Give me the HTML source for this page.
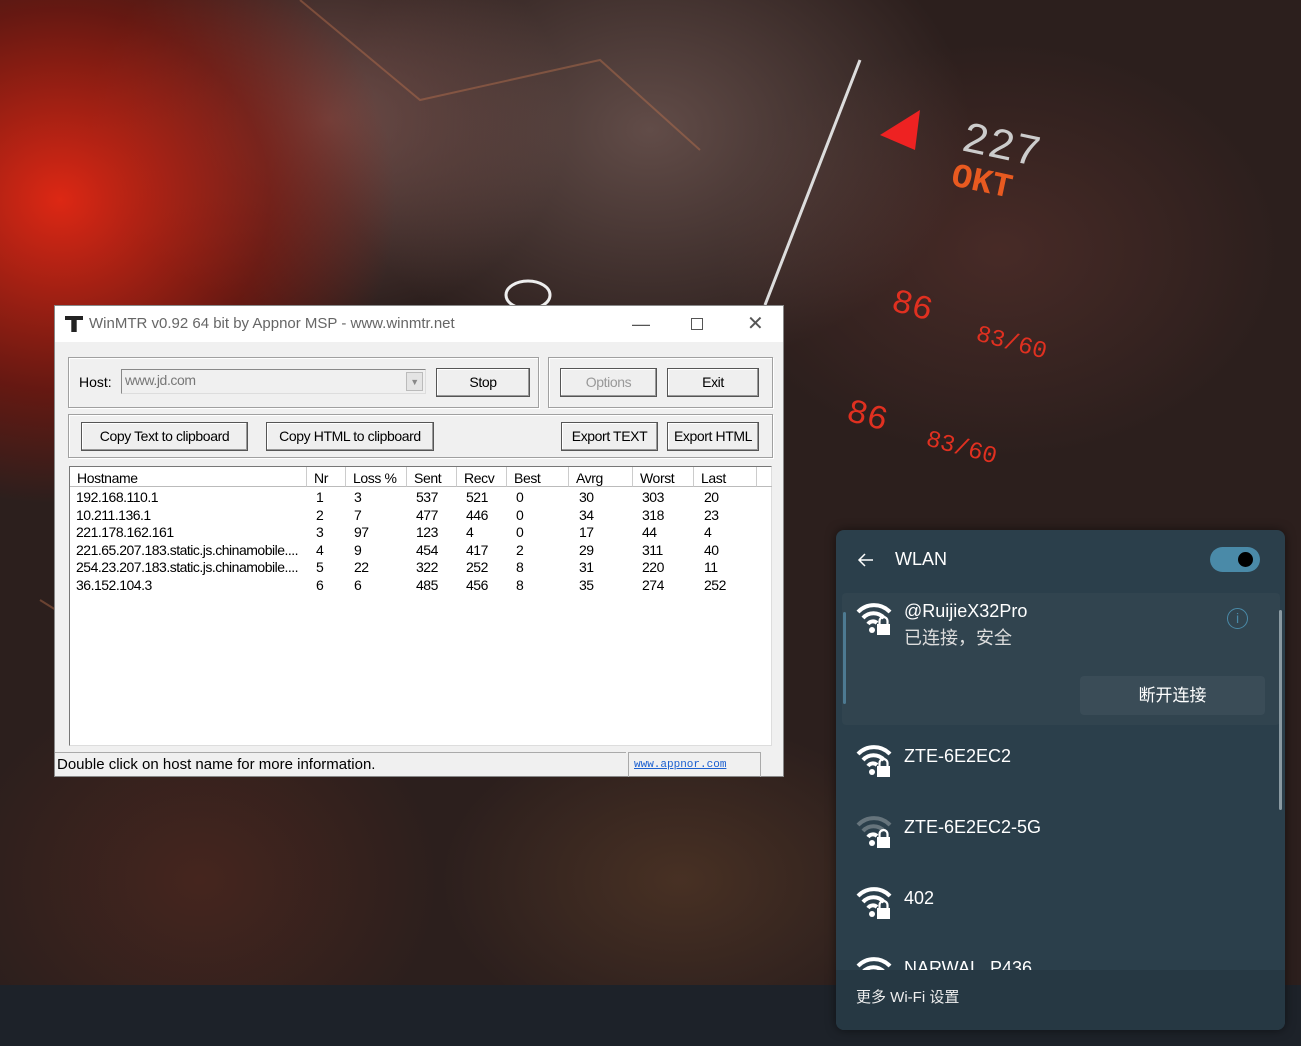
<!DOCTYPE html>
<html><head><meta charset="utf-8"><style>
*{margin:0;padding:0;box-sizing:border-box}
body{width:1301px;height:1046px;overflow:hidden;position:relative;font-family:"Liberation Sans","Noto Sans CJK SC",sans-serif;
background:
radial-gradient(ellipse 420px 380px at 60px 200px,rgba(230,40,20,.95),rgba(140,20,10,.6) 50%,transparent 80%),
radial-gradient(ellipse 300px 250px at 330px 120px,rgba(130,90,85,.75),transparent 80%),
radial-gradient(ellipse 400px 300px at 650px 130px,rgba(120,95,90,.7),transparent 80%),
radial-gradient(ellipse 350px 260px at 1000px 250px,rgba(90,50,45,.6),transparent 80%),
radial-gradient(ellipse 300px 250px at 200px 880px,rgba(80,40,30,.7),transparent 80%),
radial-gradient(ellipse 300px 200px at 680px 880px,rgba(90,60,40,.6),transparent 80%),
#2c1f1d}
.abs{position:absolute}
.win{left:54px;top:305px;width:730px;height:472px;background:#f0f0f0;border:1px solid #888}
.title{height:36px;background:#fff;font-size:15px;color:#666;line-height:36px;padding-left:34px}
.grp{position:absolute;border:1px solid #a0a0a0;box-shadow:inset 1px 1px 0 #fff,1px 1px 0 #fff}
.btn{position:absolute;border:1px solid #555;background:#efefef;box-shadow:inset -1px -1px 0 #999,inset 1px 1px 0 #fff;font-size:14px;text-align:center;color:#000;letter-spacing:-.4px}
.cell{position:absolute;font-size:14px;color:#000;letter-spacing:-.5px;white-space:nowrap}
.hd{position:absolute;top:0;height:20px;border-right:1px solid #ccc;border-bottom:1px solid #bbb;font-size:14px;line-height:22px;padding-left:7px;letter-spacing:-.4px}
.wifi{left:836px;top:530px;width:449px;height:500px;background:#2b3f4b;border-radius:8px;color:#fff;overflow:hidden;box-shadow:0 0 10px rgba(0,0,0,.5)}
.net{position:absolute;left:68px;font-size:18px;color:#fff}
</style></head><body>
<svg class="abs" style="left:0;top:0" width="1301" height="1046">
<line x1="860" y1="60" x2="765" y2="305" stroke="#ddd" stroke-width="3"/>
<ellipse cx="528" cy="295" rx="22" ry="14" fill="none" stroke="#eee" stroke-width="3"/>
<polygon points="880,135 920,110 915,150" fill="#e22"/>
<text x="960" y="150" font-size="44" fill="#ccc" font-family="Liberation Mono" transform="rotate(12 960 150)">227</text>
<text x="950" y="185" font-size="34" fill="#e85a20" font-family="Liberation Mono" font-weight="bold" transform="rotate(12 950 185)">OKT</text>
<text x="890" y="310" font-size="34" fill="#e03020" font-family="Liberation Mono" transform="rotate(15 890 310)">86</text>
<text x="975" y="340" font-size="24" fill="#e03020" font-family="Liberation Mono" transform="rotate(15 975 340)">83/60</text>
<text x="845" y="420" font-size="34" fill="#e03020" font-family="Liberation Mono" transform="rotate(15 845 420)">86</text>
<text x="925" y="445" font-size="24" fill="#e03020" font-family="Liberation Mono" transform="rotate(15 925 445)">83/60</text>
<path d="M300 0 L420 100 L600 60 L700 150 M40 600 L200 700 L350 650" stroke="rgba(200,120,80,.4)" fill="none" stroke-width="2"/>
</svg>
<div class="abs" style="left:0;top:985px;width:1301px;height:61px;background:#1d2229"></div>

<div class="abs win">
 <div class="title"><span class="abs" style="left:10px;top:10px;width:18px;height:16px;background:#222;clip-path:polygon(0 0,100% 0,100% 25%,65% 25%,65% 100%,35% 100%,35% 25%,0 25%)"></span>WinMTR v0.92 64 bit by Appnor MSP - www.winmtr.net
  <span class="abs" style="left:577px;top:0;font-size:18px;color:#555">&#8212;</span>
  <span class="abs" style="left:636px;top:12px;width:12px;height:12px;border:1px solid #555"></span>
  <span class="abs" style="left:692px;top:0;font-size:20px;color:#555">&#10005;</span>
 </div>
 <div class="grp" style="left:13px;top:51px;width:471px;height:51px"></div>
 <div class="abs" style="left:24px;top:68px;font-size:14px">Host:</div>
 <div class="abs" style="left:66px;top:63px;width:305px;height:25px;border:1px solid #888;border-right-color:#ddd;border-bottom-color:#ddd;background:#f0f0f0;font-size:14px;color:#777;padding:2px 3px;letter-spacing:-.4px">www.jd.com
  <span class="abs" style="right:2px;top:2px;width:17px;height:19px;background:#e4e4e4;border:1px solid #bbb;font-size:9px;color:#888;text-align:center;line-height:18px">&#9660;</span></div>
 <div class="btn" style="left:381px;top:62px;width:94px;height:29px;line-height:27px">Stop</div>
 <div class="grp" style="left:493px;top:51px;width:225px;height:51px"></div>
 <div class="btn" style="left:505px;top:62px;width:97px;height:29px;line-height:27px;color:#999">Options</div>
 <div class="btn" style="left:612px;top:62px;width:92px;height:29px;line-height:27px">Exit</div>
 <div class="grp" style="left:13px;top:108px;width:705px;height:44px"></div>
 <div class="btn" style="left:26px;top:116px;width:167px;height:29px;line-height:27px">Copy Text to clipboard</div>
 <div class="btn" style="left:211px;top:116px;width:168px;height:29px;line-height:27px">Copy HTML to clipboard</div>
 <div class="btn" style="left:506px;top:116px;width:97px;height:29px;line-height:27px">Export TEXT</div>
 <div class="btn" style="left:612px;top:116px;width:92px;height:29px;line-height:27px">Export HTML</div>
 <div class="abs" style="left:14px;top:160px;width:703px;height:280px;background:#fff;border:1px solid #777;border-right-color:#ddd;border-bottom-color:#ddd">
  <div class="hd" style="left:0;width:237px">Hostname</div>
  <div class="hd" style="left:237px;width:39px">Nr</div>
  <div class="hd" style="left:276px;width:61px">Loss %</div>
  <div class="hd" style="left:337px;width:50px">Sent</div>
  <div class="hd" style="left:387px;width:50px">Recv</div>
  <div class="hd" style="left:437px;width:62px">Best</div>
  <div class="hd" style="left:499px;width:64px">Avrg</div>
  <div class="hd" style="left:563px;width:61px">Worst</div>
  <div class="hd" style="left:624px;width:63px">Last</div>
  <div class="hd" style="left:687px;width:15px;border-right:none"></div>
 </div>
 <div class="abs" style="left:0;top:183px">
 <div class="cell" style="left:21px;top:0">192.168.110.1</div><div class="cell" style="left:21px;top:17.6px">10.211.136.1</div><div class="cell" style="left:21px;top:35.2px">221.178.162.161</div><div class="cell" style="left:21px;top:52.8px">221.65.207.183.static.js.chinamobile....</div><div class="cell" style="left:21px;top:70.4px">254.23.207.183.static.js.chinamobile....</div><div class="cell" style="left:21px;top:88px">36.152.104.3</div>
 <div class="cell" style="left:261px;top:0;line-height:17.6px">1<br>2<br>3<br>4<br>5<br>6</div>
 <div class="cell" style="left:299px;top:0;line-height:17.6px">3<br>7<br>97<br>9<br>22<br>6</div>
 <div class="cell" style="left:361px;top:0;line-height:17.6px">537<br>477<br>123<br>454<br>322<br>485</div>
 <div class="cell" style="left:411px;top:0;line-height:17.6px">521<br>446<br>4<br>417<br>252<br>456</div>
 <div class="cell" style="left:461px;top:0;line-height:17.6px">0<br>0<br>0<br>2<br>8<br>8</div>
 <div class="cell" style="left:524px;top:0;line-height:17.6px">30<br>34<br>17<br>29<br>31<br>35</div>
 <div class="cell" style="left:587px;top:0;line-height:17.6px">303<br>318<br>44<br>311<br>220<br>274</div>
 <div class="cell" style="left:649px;top:0;line-height:17.6px">20<br>23<br>4<br>40<br>11<br>252</div>
 </div>
 <div class="abs" style="left:0;top:446px;width:571px;height:25px;border-top:1px solid #aaa;font-size:15px;line-height:24px;padding-left:2px">Double click on host name for more information.</div>
 <div class="abs" style="left:573px;top:446px;width:133px;height:25px;border:1px solid #aaa;border-bottom:none;font-family:'Liberation Mono',monospace;font-size:11px;color:#1a5fd0;text-decoration:underline;line-height:24px;padding-left:5px">www.appnor.com</div>
</div>

<div class="abs wifi">
 <svg class="abs" style="left:20px;top:20px" width="20" height="20"><path d="M17 10H4M9 4L3 10l6 6" stroke="#fff" stroke-width="1.5" fill="none"/></svg>
 <div class="abs" style="left:59px;top:19px;font-size:18px">WLAN</div>
 <div class="abs" style="left:374px;top:17px;width:50px;height:25px;border-radius:13px;background:#4a8aa8"><span class="abs" style="left:28px;top:5px;width:15px;height:15px;border-radius:50%;background:#000"></span></div>
 <div class="abs" style="left:6px;top:63px;width:438px;height:132px;background:#31444f;border-radius:4px"></div>
 <div class="abs" style="left:7px;top:82px;width:3px;height:92px;background:#4d7a92;border-radius:2px"></div>
 <div class="net" style="top:71px">@RuijieX32Pro</div>
 <div class="net" style="top:94px;color:#ddd">已连接，安全</div>
 <div class="abs" style="left:391px;top:78px;width:21px;height:21px;border:1.5px solid #4a8aa8;border-radius:50%;color:#4a8aa8;font-size:14px;text-align:center;line-height:18px">i</div>
 <div class="abs" style="left:244px;top:146px;width:185px;height:39px;background:#3a4c57;border-radius:4px;text-align:center;line-height:39px;font-size:17px">断开连接</div>
 <div class="net" style="top:216px">ZTE-6E2EC2</div>
 <div class="net" style="top:287px">ZTE-6E2EC2-5G</div>
 <div class="net" style="top:358px">402</div>
 <div class="net" style="top:428px">NARWAL_P436</div>
 <div class="abs" style="left:443px;top:80px;width:3px;height:200px;background:#8a9aa2;border-radius:2px"></div>
 <svg class="abs" style="left:20px;top:70px" width="40" height="380">
  <g id="w"><path d="M2 12 A22 22 0 0 1 34 12" stroke="#fff" stroke-width="4" fill="none"/><path d="M7 18 A14 14 0 0 1 28 18" stroke="#fff" stroke-width="4" fill="none"/><path d="M12 24 A6 6 0 0 1 21 23" stroke="#fff" stroke-width="4" fill="none"/><rect x="21" y="24" width="13" height="11" fill="#fff"/><path d="M23.5 25v-4a4 4 0 0 1 8 0v4" stroke="#fff" stroke-width="2.2" fill="none"/><circle cx="16" cy="30" r="3" fill="#fff"/></g>
  <use href="#w" y="142"/>
  <g transform="translate(0,213)"><path d="M2 12 A22 22 0 0 1 34 12" stroke="#66747c" stroke-width="4" fill="none"/><path d="M7 18 A14 14 0 0 1 28 18" stroke="#66747c" stroke-width="4" fill="none"/><path d="M12 24 A6 6 0 0 1 21 23" stroke="#fff" stroke-width="4" fill="none"/><rect x="21" y="24" width="13" height="11" fill="#fff"/><path d="M23.5 25v-4a4 4 0 0 1 8 0v4" stroke="#fff" stroke-width="2.2" fill="none"/><circle cx="16" cy="30" r="3" fill="#fff"/></g>
  <use href="#w" y="284"/>
  <use href="#w" y="354"/>
 </svg>
 <div class="abs" style="left:0;top:440px;width:449px;height:60px;background:#263843;font-size:15px;line-height:56px;padding-left:20px;color:#eee">更多 Wi-Fi 设置</div>
</div>
</body></html>
